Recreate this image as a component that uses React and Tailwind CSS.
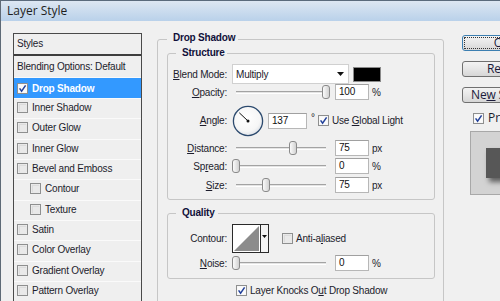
import React from 'react';

const styleRows = [
  { name: 'Inner Shadow' },
  { name: 'Outer Glow' },
  { name: 'Inner Glow' },
  { name: 'Bevel and Emboss' },
  { name: 'Contour', sub: true },
  { name: 'Texture', sub: true },
  { name: 'Satin' },
  { name: 'Color Overlay' },
  { name: 'Gradient Overlay' },
  { name: 'Pattern Overlay' },
];

const CheckBox = ({ checked }) => (
  <svg width="11" height="11" viewBox="0 0 11 11" className="shrink-0 block">
    <rect x="0.5" y="0.5" width="10" height="10" fill="#f4f4f4" stroke="#8e8f8f" />
    {!checked && <rect x="1.5" y="1.5" width="8" height="8" fill="#dcdcdc" />}
    {!checked && <rect x="3" y="3" width="6" height="6" fill="#e9e9e9" />}
    {checked && <rect x="1.5" y="1.5" width="8" height="8" fill="#fbfbfb" />}
    {checked && <path d="M2.6 5.4 L4.6 8.2 L8.6 2.4" stroke="#21409a" strokeWidth="1.5" fill="none" />}
  </svg>
);

// slider: track 90px wide, thumb centered on value
const Slider = ({ value }) => (
  <div className="relative w-[98px] h-[16px] shrink-0">
    <div className="absolute left-[4px] right-[4px] top-[7px] h-[3px] border-t border-[#a3a3a3] border-b border-b-white bg-[#e4e4e4]" />
    <div
      className="absolute top-[1px] w-[8px] h-[14px] rounded-[3px] border border-[#8a8a8a] bg-gradient-to-r from-[#fbfbfb] to-[#d2d2d2]"
      style={{ left: `${value * 0.9}px` }}
    />
  </div>
);

const Field = ({ value, w = 'w-[34px]' }) => (
  <div className={`${w} h-[16px] shrink-0 bg-white border border-[#b7b7b7] border-t-[#a0a0a0] pl-[3px] text-[10px] leading-[14px] text-[#111]`}>
    {value}
  </div>
);

const Label = ({ children }) => (
  <div className="w-[59px] shrink-0 text-right">{children}</div>
);

const SliderRow = ({ label, value, field, unit, className = '' }) => (
  <div className={`flex items-center h-[16px] ${className}`}>
    <Label>{label}</Label>
    <div className="ml-[5px]"><Slider value={value} /></div>
    <div className="ml-[5px]"><Field value={field} /></div>
    <span className="ml-[3px]">{unit}</span>
  </div>
);

const Group = ({ title, titleClass, className = '', children }) => (
  <div className={`relative border border-[#c6c6c6] rounded-[3px] ${className}`}>
    <span className={`absolute bg-[#f0f0f0] font-bold leading-[14px] text-[#10103a] ${titleClass}`}>{title}</span>
    {children}
  </div>
);

const Button = ({ children, focused }) => (
  <div
    className={`w-[80px] h-[16px] rounded-[3px] border bg-gradient-to-b from-[#f3f3f3] via-[#e6e6e6] to-[#d6d6d6] text-center text-[12px] leading-[13px] text-[#1b1b3b] font-['Open_Sans','Noto_Sans',sans-serif] ${
      focused ? 'border-[#3c7fb1] outline outline-1 outline-dotted outline-[#333] -outline-offset-[3px]' : 'border-[#707070]'
    }`}
  >
    {children}
  </div>
);

export default function App() {
  return (
    <div className="w-[500px] h-[301px] overflow-hidden bg-[#f0f0f0] border-l border-[#5e6a76] font-['Liberation_Sans',Arial,sans-serif] text-[10px] tracking-[-0.2px] text-[#1c1c2c]">
      {/* title bar */}
      <div className="h-[21px] border-t border-[#5b6b7c] bg-gradient-to-b from-[#dde7f2] to-[#b9d1ea] pl-[6px] flex items-center">
        <span className="text-[12px] tracking-normal text-[#1e1e1e] font-['Open_Sans','Noto_Sans',sans-serif] leading-none">Layer Style</span>
      </div>

      <div className="flex pl-[12px] pt-[12px]">
        {/* styles list */}
        <div className="w-[129px] shrink-0 h-[290px] border border-b-0 border-[#4a4a4a] bg-[#efefef]">
          <div className="h-[22px] border-b-[2px] border-[#3e3e3e] pl-[3px] flex items-center pb-[1px]">Styles</div>
          <div className="h-[22px] border-b border-[#fafafa] pl-[3px] flex items-center pb-[1px]">Blending Options: Default</div>
          <div className="h-[20px] bg-[#3399ff] pl-[3px] flex items-center gap-[4px] text-white font-bold">
            <CheckBox checked />
            <span>Drop Shadow</span>
          </div>
          {styleRows.map((row) => (
            <div
              key={row.name}
              className={`h-[20.33px] border-t border-[#fafafa] flex items-center gap-[4px] pb-[2px] ${row.sub ? 'pl-[16px]' : 'pl-[3px]'}`}
            >
              <CheckBox />
              <span>{row.name}</span>
            </div>
          ))}
        </div>

        {/* drop shadow panel */}
        <Group title="Drop Shadow" titleClass="left-[9px] -top-[9px] pl-[6px] pr-[3px]" className="ml-[15px] mt-[6px] w-[287px] h-[290px] shrink-0 pl-[9px] pr-[8px] pt-[13px]">
          <Group title="Structure" titleClass="left-[8px] -top-[8px] pl-[6px] pr-[2px]" className="h-[147px] pt-[10px]">
            <div className="flex items-center h-[20px]">
              <Label><u>B</u>lend Mode:</Label>
              <div className="ml-[5px] w-[117px] h-[20px] bg-white border border-[#d0d0d0] flex items-center pl-[3px] pr-[4px] justify-between">
                <span>Multiply</span>
                <svg width="7" height="4" viewBox="0 0 7 4"><path d="M0 0 H7 L3.5 4 Z" fill="#111" /></svg>
              </div>
              <div className="ml-[4px] w-[28px] h-[15px] bg-black border border-[#8a8a8a]" />
            </div>
            <SliderRow label={<><u>O</u>pacity:</>} value={100} field="100" unit="%" />
            <div className="flex items-center h-[31px] mt-[5px]">
              <Label><u>A</u>ngle:</Label>
              <svg width="32" height="32" viewBox="0 0 32 32" className="ml-[5px] shrink-0">
                <defs>
                  <radialGradient id="dial" cx="0.45" cy="0.4" r="0.65">
                    <stop offset="0" stopColor="#ffffff" />
                    <stop offset="0.7" stopColor="#f6f6f6" />
                    <stop offset="1" stopColor="#d8dde4" />
                  </radialGradient>
                </defs>
                <circle cx="16" cy="16" r="14.6" fill="url(#dial)" stroke="#2c4a6e" strokeWidth="1.3" />
                <line x1="16" y1="16" x2="7.3" y2="7.8" stroke="#111" strokeWidth="1" />
                <circle cx="16" cy="16" r="1.5" fill="#111" />
              </svg>
              <div className="ml-[4px]"><Field value="137" w="w-[39px]" /></div>
              <span className="w-[10px] pl-[4px] -mt-[6px]">°</span>
              <div className="ml-[1px]"><CheckBox checked /></div>
              <span className="ml-[3px]">Use <u>G</u>lobal Light</span>
            </div>
            <SliderRow label={<><u>D</u>istance:</>} value={63} field="75" unit="px" className="mt-[4px]" />
            <SliderRow label={<>Sp<u>r</u>ead:</>} value={0} field="0" unit="%" className="mt-[2px]" />
            <SliderRow label={<><u>S</u>ize:</>} value={33} field="75" unit="px" className="mt-[3px]" />
          </Group>

          <Group title="Quality" titleClass="left-[8px] -top-[8px] pl-[6px] pr-[3px]" className="mt-[13px] h-[66px] pt-[10px]">
            <div className="flex items-center h-[29px]">
              <Label>Contour:</Label>
              <div className="ml-[5px] w-[37px] h-[29px] border border-[#2a2a2a] flex shrink-0 bg-white">
                <svg width="27" height="27" viewBox="0 0 27 27" className="block">
                  <rect width="27" height="27" fill="#fff" />
                  <path d="M1 26 L26 1 L26 26 Z" fill="#8c8c8c" />
                </svg>
                <div className="w-[8px] border-l border-[#2a2a2a] bg-[#f4f4f4] flex justify-center pt-[10px]">
                  <svg width="5" height="3" viewBox="0 0 5 3"><path d="M0 0 H5 L2.5 3 Z" fill="#111" /></svg>
                </div>
              </div>
              <div className="ml-[13px]"><CheckBox /></div>
              <span className="ml-[3px]">Anti-a<u>l</u>iased</span>
            </div>
            <SliderRow label={<><u>N</u>oise:</>} value={0} field="0" unit="%" className="mt-[2px]" />
          </Group>

          <div className="flex items-center h-[14px] mt-[4px] pl-[69px]">
            <CheckBox checked />
            <span className="ml-[3px]">Layer Knocks O<u>u</u>t Drop Shadow</span>
          </div>
        </Group>

        {/* buttons */}
        <div className="ml-[18px] mt-[2px] flex flex-col shrink-0">
          <Button focused>OK</Button>
          <div className="mt-[10px]"><Button>Reset</Button></div>
          <div className="mt-[10px]"><Button>Ne<u>w</u> Style...</Button></div>
          <div className="mt-[9px] ml-[11px] flex items-center">
            <CheckBox checked />
            <span className="ml-[4px] text-[12px] tracking-normal font-['Open_Sans','Noto_Sans',sans-serif] leading-none">Preview</span>
          </div>
          <div className="mt-[7px] ml-[8px] w-[44px] h-[64px] border border-[#a8a8a8] bg-[#d3d3d3] pt-[16px] pl-[15px]">
            <div className="w-[30px] h-[30px] bg-[#575757] shadow-[3px_4px_5px_rgba(0,0,0,0.55)]" />
          </div>
        </div>
      </div>
    </div>
  );
}
